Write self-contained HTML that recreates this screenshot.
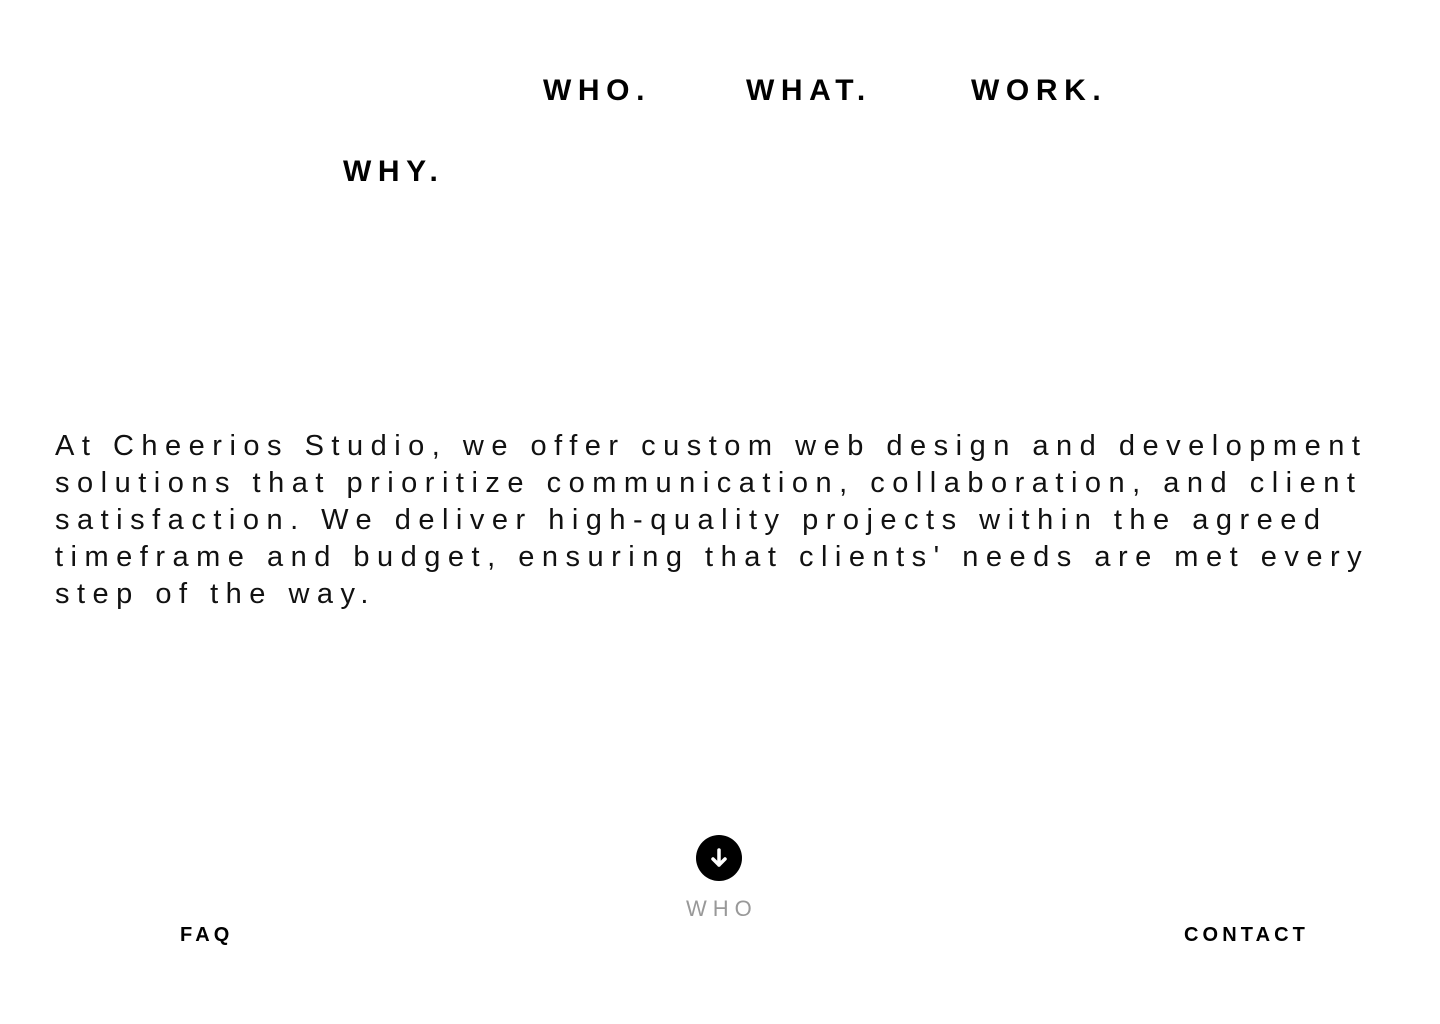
<!DOCTYPE html>
<html><head><meta charset="utf-8"><style>
body{margin:0;width:1440px;height:1024px;background:#fff;position:relative;overflow:hidden;font-family:"Liberation Sans",sans-serif;color:#000}
.n{position:absolute;font-weight:bold;font-size:30px;letter-spacing:6.6px;line-height:1}
.p{position:absolute;left:55px;top:428px;font-size:29px;line-height:37px;letter-spacing:7.5px;white-space:nowrap;color:#111}
.b{position:absolute;font-weight:bold;font-size:20px;letter-spacing:4.1px;line-height:1}
</style></head><body>
<div class="n" style="left:543px;top:76px">WHO.</div>
<div class="n" style="left:746px;top:76px">WHAT.</div>
<div class="n" style="left:971px;top:76px">WORK.</div>
<div class="n" style="left:343px;top:157px">WHY.</div>
<div class="p">At Cheerios Studio, we offer custom web design and development<br>solutions that prioritize communication, collaboration, and client<br>satisfaction. We deliver high-quality projects within the agreed<br>timeframe and budget, ensuring that clients' needs are met every<br>step of the way.</div>
<svg style="position:absolute;left:696px;top:835px" width="46" height="46" viewBox="0 0 46 46"><circle cx="23" cy="23" r="23" fill="#000"/><path d="M23 15v15M17 24l6 6 6-6" stroke="#fff" stroke-width="3.5" fill="none" stroke-linecap="round" stroke-linejoin="round"/></svg>
<div style="position:absolute;left:686px;top:898px;font-size:22px;letter-spacing:6px;color:#999;font-weight:300;line-height:1">WHO</div>
<div class="b" style="left:180px;top:925px">FAQ</div>
<div class="b" style="left:1184px;top:925px">CONTACT</div>
</body></html>
